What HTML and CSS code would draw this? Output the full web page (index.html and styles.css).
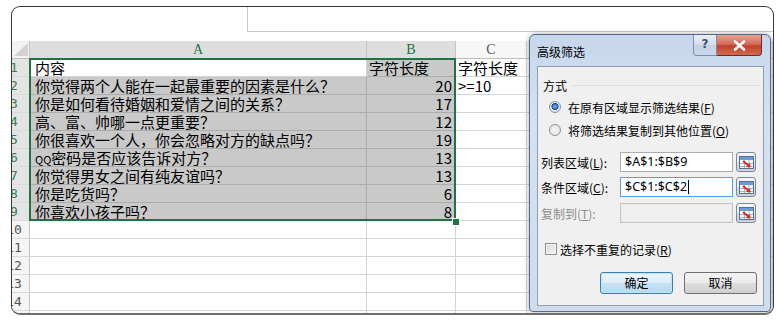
FILE: index.html
```html
<!DOCTYPE html>
<html lang="zh">
<head>
<meta charset="utf-8">
<link rel="stylesheet" href="styles.css">
</head>
<body>
<div class="frame">
  <div class="topbar">
    <div class="namebox"></div>
    <div class="formula"></div>
  </div>
  <div class="sheet">
    <div class="corner"><svg width="14" height="13" viewBox="0 0 14 13"><polygon points="14,0 14,13 0,13" fill="#d2d2d2"/></svg></div>
    <div class="ch sel">A</div>
    <div class="ch sel">B</div>
    <div class="ch">C</div>
    <div class="ch"></div>

    <div class="rh sel"><span>1</span></div>
    <div class="c a">内容</div>
    <div class="c g">字符长度</div>
    <div class="c">字符长度</div>
    <div class="c"></div>

    <div class="rh sel"><span>2</span></div>
    <div class="c a g">你觉得两个人能在一起最重要的因素是什么？</div>
    <div class="c g n">20</div>
    <div class="c">&gt;=10</div>
    <div class="c"></div>

    <div class="rh sel"><span>3</span></div>
    <div class="c a g">你是如何看待婚姻和爱情之间的关系？</div>
    <div class="c g n">17</div>
    <div class="c"></div>
    <div class="c"></div>

    <div class="rh sel"><span>4</span></div>
    <div class="c a g">高、富、帅哪一点更重要？</div>
    <div class="c g n">12</div>
    <div class="c"></div>
    <div class="c"></div>

    <div class="rh sel"><span>5</span></div>
    <div class="c a g">你很喜欢一个人，你会忽略对方的缺点吗？</div>
    <div class="c g n">19</div>
    <div class="c"></div>
    <div class="c"></div>

    <div class="rh sel"><span>6</span></div>
    <div class="c a g"><span class="small">QQ</span>密码是否应该告诉对方？</div>
    <div class="c g n">13</div>
    <div class="c"></div>
    <div class="c"></div>

    <div class="rh sel"><span>7</span></div>
    <div class="c a g">你觉得男女之间有纯友谊吗？</div>
    <div class="c g n">13</div>
    <div class="c"></div>
    <div class="c"></div>

    <div class="rh sel"><span>8</span></div>
    <div class="c a g">你是吃货吗？</div>
    <div class="c g n">6</div>
    <div class="c"></div>
    <div class="c"></div>

    <div class="rh sel"><span>9</span></div>
    <div class="c a g">你喜欢小孩子吗？</div>
    <div class="c g n">8</div>
    <div class="c"></div>
    <div class="c"></div>

    <div class="rh"><span>10</span></div>
    <div class="c"></div><div class="c"></div><div class="c"></div><div class="c"></div>
    <div class="rh"><span>11</span></div>
    <div class="c"></div><div class="c"></div><div class="c"></div><div class="c"></div>
    <div class="rh"><span>12</span></div>
    <div class="c"></div><div class="c"></div><div class="c"></div><div class="c"></div>
    <div class="rh"><span>13</span></div>
    <div class="c"></div><div class="c"></div><div class="c"></div><div class="c"></div>
    <div class="rh"><span>14</span></div>
    <div class="c"></div><div class="c"></div><div class="c"></div><div class="c"></div>
    <div class="rh"><span>15</span></div>
    <div class="c"></div><div class="c"></div><div class="c"></div><div class="c"></div>

    <div class="selbox"></div>
    <div class="handle"></div>
  </div>

  <div class="dialog">
    <div class="titlebar">
      <span class="title">高级筛选</span>
      <div class="capbtns">
        <div class="help">?</div>
        <div class="close"><svg width="13" height="11" viewBox="0 0 13 11"><path d="M2 1.5 L11 9.5 M11 1.5 L2 9.5" stroke="#fff" stroke-width="2.6" stroke-linecap="round"/></svg></div>
      </div>
    </div>
    <div class="client">
      <div class="group"><span>方式</span><div class="gline"></div></div>
      <div class="radio-row first"><span class="radio on"></span><span>在原有区域显示筛选结果(<u>F</u>)</span></div>
      <div class="radio-row"><span class="radio"></span><span>将筛选结果复制到其他位置(<u>O</u>)</span></div>
      <div class="field first">
        <span class="label">列表区域(<u>L</u>):</span>
        <div class="input">$A$1:$B$9</div>
        <div class="refbtn"><svg width="15" height="13" viewBox="0 0 15 13"><rect x="0.5" y="0.5" width="14" height="12" fill="#fff" stroke="#4f6f9f"/><rect x="1" y="1" width="13" height="3" fill="#6f9bd3"/><path d="M1 7.5 H14 M1 10.5 H14 M5.5 4 V12 M10 4 V12" stroke="#9fb4d0" stroke-width="1"/><path d="M4 5 L10 10" stroke="#d42a1f" stroke-width="2"/><path d="M11.5 11.5 L7 11 L11 7 Z" fill="#d42a1f"/></svg></div>
      </div>
      <div class="field">
        <span class="label">条件区域(<u>C</u>):</span>
        <div class="input focus">$C$1:$C$2<span class="caret"></span></div>
        <div class="refbtn"><svg width="15" height="13" viewBox="0 0 15 13"><rect x="0.5" y="0.5" width="14" height="12" fill="#fff" stroke="#4f6f9f"/><rect x="1" y="1" width="13" height="3" fill="#6f9bd3"/><path d="M1 7.5 H14 M1 10.5 H14 M5.5 4 V12 M10 4 V12" stroke="#9fb4d0" stroke-width="1"/><path d="M4 5 L10 10" stroke="#d42a1f" stroke-width="2"/><path d="M11.5 11.5 L7 11 L11 7 Z" fill="#d42a1f"/></svg></div>
      </div>
      <div class="field third">
        <span class="label dis">复制到(<u>T</u>):</span>
        <div class="input disabled"></div>
        <div class="refbtn"><svg width="15" height="13" viewBox="0 0 15 13"><rect x="0.5" y="0.5" width="14" height="12" fill="#fff" stroke="#4f6f9f"/><rect x="1" y="1" width="13" height="3" fill="#6f9bd3"/><path d="M1 7.5 H14 M1 10.5 H14 M5.5 4 V12 M10 4 V12" stroke="#9fb4d0" stroke-width="1"/><path d="M4 5 L10 10" stroke="#d42a1f" stroke-width="2"/><path d="M11.5 11.5 L7 11 L11 7 Z" fill="#d42a1f"/></svg></div>
      </div>
      <div class="check-row"><span class="checkbox"></span><span>选择不重复的记录(<u>R</u>)</span></div>
      <div class="buttons">
        <div class="btn default">确定</div>
        <div class="btn">取消</div>
      </div>
    </div>
  </div>
</div>
</body>
</html>
```

FILE: styles.css
```css
* { box-sizing: border-box; }
html, body { margin: 0; background: #fff; }
body {
  width: 777px;
  height: 323px;
  overflow: hidden;
  font-family: "Noto Sans CJK SC", sans-serif;
}

.frame {
  position: relative;
  margin: 6px 0 0 11px;
  width: 763px;
  height: 309px;
  border: 1px solid #3a3a3a;
  border-bottom: 2px solid #6e6e6e;
  border-radius: 9px;
  overflow: hidden;
  background: #fff;
}

.topbar { display: flex; height: 34px; }
.namebox { width: 235px; }
.formula {
  flex: 1;
  height: 25px;
  border-left: 1px solid #c8c8c8;
  border-bottom: 1px solid #c8c8c8;
}

.sheet {
  position: relative;
  display: grid;
  grid-template-columns: 18px 337px 89px 71px 1fr;
  grid-auto-rows: 18px;
}

.corner {
  background: #f3f3f3;
  border-right: 1px solid #c6c6c6;
  border-bottom: 1px solid #bdbdbd;
  display: flex;
  align-items: flex-end;
  justify-content: flex-end;
  padding: 0 1px 2px 0;
}

.ch {
  background: #f7f7f7;
  border-right: 1px solid #d4d4d4;
  border-bottom: 1px solid #bdbdbd;
  text-align: center;
  font: 14px/17px "Liberation Serif", serif;
  color: #555;
}
.ch.sel {
  background: #dedede;
  color: #217346;
  border-right-color: #c4c4c4;
}

.rh {
  background: #f5f5f5;
  border-right: 1px solid #c6c6c6;
  border-bottom: 1px solid #dadada;
  overflow: hidden;
  font: 13px/17px "DejaVu Sans Mono", monospace;
  color: #555;
}
.rh span {
  display: block;
  width: 32px;
  margin-left: -14px;
  text-align: center;
}
.rh.sel { background: #e4e4e4; color: #3b7a52; }

.c {
  border-right: 1px solid #d4d4d4;
  border-bottom: 1px solid #d4d4d4;
  padding: 0 2px;
  font-size: 15px;
  line-height: 17px;
  white-space: nowrap;
  color: #000;
}
.c.a { padding-left: 5px; }
.c.g { background: #c9c9c9; border-color: #acacac; }
.c.n { text-align: right; padding-right: 3px; }
.small { font-size: 11px; }

.selbox {
  position: absolute;
  left: 17px;
  top: 17px;
  width: 427px;
  height: 163px;
  border: 2px solid #217346;
}
.handle {
  position: absolute;
  left: 441px;
  top: 178px;
  width: 6px;
  height: 6px;
  background: #217346;
  outline: 1px solid #fff;
}

/* dialog */
.dialog {
  position: absolute;
  left: 517px;
  top: 27px;
  width: 242px;
  height: 278px;
  border: 1px solid #56688a;
  border-radius: 6px 6px 4px 4px;
  background: linear-gradient(180deg, #c6d6ec 0%, #d6e2f1 30%, #cfdcee 100%);
  box-shadow: 0 0 5px rgba(0, 0, 0, 0.35);
  font-size: 12px;
  color: #000;
}
.titlebar {
  display: flex;
  height: 31px;
  padding-left: 7px;
}
.title { line-height: 33px; font-size: 12px; }
.capbtns {
  margin-left: auto;
  margin-right: 8px;
  display: flex;
  height: 21px;
}
.help {
  width: 24px;
  border: 1px solid #7d8ea8;
  border-top: none;
  border-radius: 0 0 0 4px;
  background: linear-gradient(180deg, #e8eef6 0%, #d3dded 50%, #c3d1e4 51%, #ccd8ea 100%);
  color: #3f5170;
  font: bold 12px/19px "DejaVu Sans", sans-serif;
  text-align: center;
}
.close {
  width: 45px;
  border: 1px solid #6e2b22;
  border-left: none;
  border-top: none;
  border-radius: 0 0 4px 0;
  background: linear-gradient(180deg, #e6a294 0%, #d46d5b 45%, #c2412b 55%, #cf6a50 100%);
  display: flex;
  align-items: center;
  justify-content: center;
}

.client {
  margin-left: 7px;
  width: 227px;
  height: 240px;
  border: 1px solid #8d9db5;
  background: #f0f0f0;
  display: flex;
  flex-direction: column;
}
.group {
  margin-top: 9px;
  height: 18px;
  display: flex;
  align-items: center;
  gap: 6px;
  padding-left: 5px;
}
.gline { flex: 1; height: 1px; background: #d5dfe5; margin-right: 2px; }

.radio-row {
  margin-top: 5px;
  height: 18px;
  display: flex;
  align-items: center;
  gap: 7px;
  padding-left: 11px;
  font-size: 12px;
}
.radio-row.first { margin-top: 4px; }
.radio {
  width: 12px;
  height: 12px;
  border-radius: 50%;
  border: 1px solid #8f9092;
  background: radial-gradient(circle at 50% 50%, #f6f6f6 0, #e0e0e0 100%);
}
.radio.on {
  background: radial-gradient(circle at 50% 45%, #8cc0f0 0, #2f6dbc 2.4px, #1c4f98 3.3px, #eef2f6 3.9px, #dadada 6px);
}

.field {
  margin-top: 5px;
  height: 20px;
  display: flex;
  align-items: center;
  padding-left: 3px;
}
.field.first { margin-top: 13px; }
.field.third { margin-top: 6px; }
.label { width: 79px; font-size: 12px; }
.label.dis { color: #8d8d8d; }
.input {
  width: 113px;
  height: 20px;
  border: 1px solid #abadb3;
  background: #fff;
  padding-left: 4px;
  font: 12.5px/18px "Noto Sans", sans-serif;
  display: flex;
  align-items: center;
}
.input.focus { border-color: #5a9ee0; }
.input.disabled { background: #f0f0f0; border-color: #c7c7c7; box-shadow: inset 0 0 0 1px #e8e8e8; }
.caret { width: 1px; height: 14px; background: #000; margin-left: 1px; }
.refbtn {
  margin-left: 3px;
  width: 20px;
  height: 20px;
  border: 1px solid #7b8aa0;
  border-radius: 3px;
  background: linear-gradient(180deg, #f6f6f6 0%, #ebebeb 50%, #dddddd 51%, #d2d2d2 100%);
  display: flex;
  align-items: center;
  justify-content: center;
}

.check-row {
  margin-top: 17px;
  height: 18px;
  display: flex;
  align-items: center;
  gap: 3px;
  padding-left: 7px;
  font-size: 12px;
}
.checkbox {
  width: 12px;
  height: 12px;
  border: 1px solid #8f8f8f;
  background: linear-gradient(135deg, #d8d8d8 0%, #f6f6f6 100%);
  box-shadow: inset 0 0 0 1px #f4f4f4;
}

.buttons {
  margin-top: 14px;
  display: flex;
  justify-content: flex-end;
  gap: 11px;
  padding-right: 6px;
}
.btn {
  width: 73px;
  height: 22px;
  border: 1px solid #707070;
  border-radius: 3px;
  background: linear-gradient(180deg, #f2f2f2 0%, #ebebeb 50%, #dddddd 51%, #cfcfcf 100%);
  text-align: center;
  line-height: 20px;
  font-size: 12px;
}
.btn.default {
  border-color: #3c7fb1;
  background: linear-gradient(180deg, #edf6fc 0%, #dcecf8 50%, #c6e1f4 51%, #b9d8ef 100%);
  box-shadow: inset 0 0 0 1px #bfe4f8;
}
```
